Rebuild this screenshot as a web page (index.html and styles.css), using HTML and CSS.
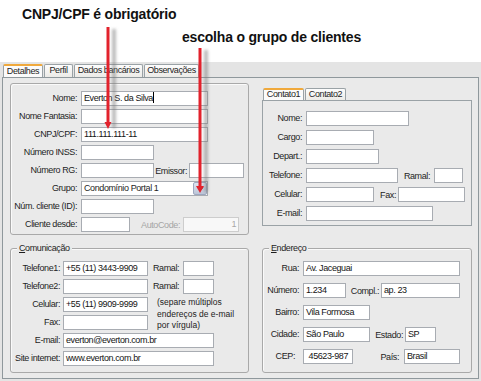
FILE: index.html
```html
<!DOCTYPE html>
<html lang="pt-BR">
<head>
    <meta charset="UTF-8">
    <title>Cadastro de clientes</title>
    <link rel="stylesheet" href="styles.css">
</head>
<body>

    <!-- Anotações -->
    <div class="notas">
        <p class="nota nota-cnpj">CNPJ/CPF é obrigatório</p>
        <p class="nota nota-grupo">escolha o grupo de clientes</p>
    </div>

    <!-- Janela de cadastro -->
    <div class="janela">
        <div class="abas">
            <span class="aba ativa w40">Detalhes</span>
            <span class="aba w29">Perfil</span>
            <span class="aba w69">Dados bancários</span>
            <span class="aba w55">Observações</span>
        </div>

        <div class="pagina">
            <!-- Dados principais -->
            <div class="grupo dados">
                <div class="linha"><span class="rotulo">Nome:</span><div class="campo w127">Everton S. da Silva<i class="cursor"></i></div></div>
                <div class="linha"><span class="rotulo">Nome Fantasia:</span><div class="campo w127"></div></div>
                <div class="linha"><span class="rotulo">CNPJ/CPF:</span><div class="campo w127">111.111.111-11</div></div>
                <div class="linha"><span class="rotulo">Número INSS:</span><div class="campo w73"></div></div>
                <div class="linha"><span class="rotulo">Número RG:</span><div class="campo w73"></div><span class="lado l35">Emissor:</span><div class="campo w55"></div></div>
                <div class="linha">
                    <span class="rotulo">Grupo:</span>
                    <div class="combo w127">
                        <span class="combo-texto">Condomínio Portal 1</span>
                        <span class="combo-botao"><svg width="7" height="5" viewBox="0 0 7 5"><path d="M1 1L3.5 3.6L6 1" fill="none" stroke="#2b2b2b" stroke-width="1.4"/></svg></span>
                    </div>
                </div>
                <div class="linha"><span class="rotulo">Núm. cliente (ID):</span><div class="campo w73"></div></div>
                <div class="linha"><span class="rotulo">Cliente desde:</span><div class="campo w49"></div><span class="lado l53 apagado">AutoCode:</span><div class="campo w56 inativo">1</div></div>
            </div>

            <!-- Contatos -->
            <div class="contatos">
                <div class="abas-contato">
                    <span class="aba ativa w41">Contato1</span>
                    <span class="aba w41">Contato2</span>
                </div>
                <div class="pagina-contato">
                    <div class="linha"><span class="rotulo">Nome:</span><div class="campo w103"></div></div>
                    <div class="linha"><span class="rotulo">Cargo:</span><div class="campo w68"></div></div>
                    <div class="linha"><span class="rotulo">Depart.:</span><div class="campo w73"></div></div>
                    <div class="linha"><span class="rotulo">Telefone:</span><div class="campo w92"></div><span class="lado l36">Ramal:</span><div class="campo w29"></div></div>
                    <div class="linha"><span class="rotulo">Celular:</span><div class="campo w68"></div><span class="lado l24">Fax:</span><div class="campo w67"></div></div>
                    <div class="linha"><span class="rotulo">E-mail:</span><div class="campo w127"></div></div>
                </div>
            </div>

            <!-- Comunicação -->
            <div class="grupo comunicacao">
                <span class="legenda"><u>C</u>omunicação</span>
                <span class="rotulo">Telefone1:</span><div class="campo w85">+55 (11) 3443-9909</div><span class="rotulo-ramal">Ramal:</span><div class="campo w31"></div>
                <span class="rotulo">Telefone2:</span><div class="campo w85"></div><span class="rotulo-ramal">Ramal:</span><div class="campo w31"></div>
                <span class="rotulo">Celular:</span><div class="campo w85">+55 (11) 9909-9999</div>
                <p class="dica">(separe múltiplos
endereços de e-mail
por vírgula)</p>
                <span class="rotulo">Fax:</span><div class="campo w85"></div>
                <span class="rotulo">E-mail:</span><div class="campo w151 largo">everton@everton.com.br</div>
                <span class="rotulo">Site internet:</span><div class="campo w151 largo">www.everton.com.br</div>
            </div>

            <!-- Endereço -->
            <div class="grupo endereco">
                <span class="legenda"><u>E</u>ndereço</span>
                <div class="linha"><span class="rotulo">Rua:</span><div class="campo w157">Av. Jaceguai</div></div>
                <div class="linha"><span class="rotulo">Número:</span><div class="campo w43">1.234</div><span class="lado l35">Compl.:</span><div class="campo w79">ap. 23</div></div>
                <div class="linha"><span class="rotulo">Bairro:</span><div class="campo w67">Vila Formosa</div></div>
                <div class="linha"><span class="rotulo">Cidade:</span><div class="campo w67">São Paulo</div><span class="lado l35">Estado:</span><div class="campo w31">SP</div></div>
                <div class="linha"><span class="rotulo rotulo-cep">CEP:</span><div class="campo w50 direita">45623-987</div><span class="lado l51">País:</span><div class="campo w56">Brasil</div></div>
            </div>
        </div>
    </div>

    <!-- Setas vermelhas das anotações -->
    <svg class="setas" width="481" height="381" viewBox="0 0 481 381">
        <defs>
            <filter id="sombra" filterUnits="userSpaceOnUse" x="0" y="0" width="481" height="381">
                <feGaussianBlur stdDeviation="1.5"/>
            </filter>
        </defs>
        <g filter="url(#sombra)" stroke="#7a7a7a" stroke-opacity="0.5" stroke-width="4" fill="none">
            <path d="M114 29V128"/>
            <path d="M206 50V192"/>
        </g>
        <g stroke="#e2222c" stroke-width="3" fill="none">
            <path d="M108 27V124"/>
            <path d="M200 48V188"/>
        </g>
        <g fill="#e2222c">
            <path d="M104.5 122H111.5L108 129Z"/>
            <path d="M196 186H204L200 193Z"/>
        </g>
    </svg>

</body>
</html>
```

FILE: styles.css
```css
body {
    margin: 0;
    width: 481px;
    height: 381px;
    overflow: hidden;
    position: relative;
    background: #fff;
    font-family: "Liberation Sans", Arial, sans-serif;
    font-size: 9px;
    letter-spacing: -0.4px;
    color: #1e1e1e;
}

/* Anotações no topo */
.notas {
    height: 62px;
}
.nota {
    margin: 0;
    font-size: 14px;
    font-weight: bold;
    letter-spacing: -0.2px;
    line-height: 16px;
    color: #111;
}
.nota-cnpj {
    padding: 6px 0 0 22px;
}
.nota-grupo {
    padding: 7px 0 0 182px;
}
.setas {
    position: absolute;
    top: 0;
    left: 0;
    pointer-events: none;
}

/* Janela e abas */
.janela {
    background: #e4e4e4;
    height: 319px;
}
.abas {
    display: flex;
    height: 15px;
    padding: 2px 0 0 3px;
    box-sizing: border-box;
}
.aba {
    box-sizing: border-box;
    height: 13px;
    margin-right: 1px;
    border: 1px solid #9aa2a6;
    border-bottom: none;
    border-radius: 2px 2px 0 0;
    background: linear-gradient(#fdfdfd, #ecebe7);
    text-align: center;
    line-height: 11px;
    white-space: nowrap;
}
.aba.ativa {
    background: #fbfbfb;
    border-top: 2px solid #f0a93c;
    line-height: 10px;
}
.w40 { width: 40px; margin-right: 1px; }
.w29 { width: 29px; }
.w69 { width: 69px; }
.w55 { width: 55px; }
.w41 { width: 41px; }

.pagina {
    margin: 0 2px;
    height: 302px;
    box-sizing: border-box;
    border: 1px solid #8f989c;
    background: #eaeaea;
    padding: 5px 0 0 7px;
    display: grid;
    grid-template-columns: 239px 210px;
    grid-template-rows: 152px 125px;
    column-gap: 13px;
    row-gap: 13px;
    align-items: start;
}

/* Caixas de grupo */
.grupo {
    position: relative;
    height: 100%;
    box-sizing: border-box;
    border: 1px solid #a9a9a9;
    border-radius: 3px;
    box-shadow: inset 1px 1px 0 #fafafa;
}
.legenda {
    position: absolute;
    top: -7px;
    left: 6px;
    padding: 0 2px;
    background: #eaeaea;
    line-height: 12px;
}

.linha {
    display: flex;
    align-items: center;
    height: 15px;
}
.rotulo {
    text-align: right;
    line-height: 15px;
    white-space: nowrap;
}
.lado {
    box-sizing: border-box;
    text-align: right;
    white-space: nowrap;
}
.l35 { width: 35px; padding-right: 2px; }
.l53 { width: 53px; padding-right: 3px; }
.l36 { width: 36px; padding-right: 4px; }
.l24 { width: 24px; padding-right: 2px; }
.l51 { width: 51px; padding-right: 5px; }
.apagado { color: #a5a5a5; }

/* Campos */
.campo {
    box-sizing: border-box;
    height: 15px;
    border: 1px solid #a8acb2;
    background: #fff;
    padding: 0 2px;
    line-height: 13px;
    white-space: nowrap;
    overflow: hidden;
    color: #141414;
}
.campo.inativo {
    border-color: #cdcdcd;
    background: #f8f8f8;
    color: #a8a8a8;
    text-align: right;
}
.campo.direita {
    text-align: right;
    padding-right: 4px;
}
.cursor {
    display: inline-block;
    width: 1px;
    height: 11px;
    background: #000;
    vertical-align: -2px;
}
.w127 { width: 127px; }
.w73 { width: 73px; }
.w55 { width: 55px; }
.w49 { width: 49px; }
.w56 { width: 56px; }
.w103 { width: 103px; }
.w68 { width: 68px; }
.w92 { width: 92px; }
.w29 { width: 29px; }
.w67 { width: 67px; }
.w85 { width: 85px; }
.w31 { width: 31px; }
.w151 { width: 151px; }
.w157 { width: 157px; }
.w43 { width: 43px; }
.w79 { width: 79px; }
.w50 { width: 50px; }

.combo {
    box-sizing: border-box;
    height: 15px;
    display: flex;
    border: 1px solid #a8acb2;
    background: #fff;
    padding-left: 2px;
}
.combo-texto {
    flex: 1;
    line-height: 13px;
    white-space: nowrap;
}
.combo-botao {
    width: 14px;
    box-sizing: border-box;
    display: flex;
    align-items: center;
    justify-content: center;
    border: 1px solid #9ea8c0;
    border-radius: 2px;
    background: linear-gradient(#dfe4ef, #bcc5d8);
}

/* Dados principais */
.dados {
    padding-top: 7px;
    display: flex;
    flex-direction: column;
    gap: 3px;
}
.dados .rotulo {
    width: 66px;
    margin-right: 4px;
}

/* Contatos */
.contatos {
    margin-top: 5px;
}
.abas-contato {
    display: flex;
    height: 12px;
    padding-left: 1px;
}
.abas-contato .aba {
    height: 12px;
    line-height: 10px;
}
.abas-contato .aba.ativa {
    line-height: 9px;
}
.pagina-contato {
    box-sizing: border-box;
    height: 126px;
    border: 1px solid #9aa2a6;
    padding-top: 10px;
    display: flex;
    flex-direction: column;
    gap: 4px;
}
.pagina-contato .rotulo {
    width: 39px;
    margin-right: 4px;
}

/* Comunicação */
.comunicacao {
    padding-top: 12px;
    display: grid;
    grid-template-columns: 52px 90px 30px 31px;
    grid-auto-rows: 15px;
    row-gap: 3px;
    align-content: start;
}
.comunicacao .rotulo {
    padding-right: 3px;
}
.rotulo-ramal {
    line-height: 15px;
}
.comunicacao .largo {
    grid-column: 2 / span 3;
}
.dica {
    grid-column: 3 / span 2;
    grid-row: span 2;
    margin: 0;
    padding-left: 4px;
    font-size: 8.5px;
    letter-spacing: 0;
    line-height: 11.5px;
    white-space: pre;
    color: #222;
}

/* Endereço */
.endereco {
    padding-top: 12px;
    display: flex;
    flex-direction: column;
    gap: 7px;
}
.endereco .rotulo {
    width: 36px;
    margin-right: 4px;
}
.endereco .rotulo-cep {
    padding-right: 4px;
    box-sizing: border-box;
}
```
